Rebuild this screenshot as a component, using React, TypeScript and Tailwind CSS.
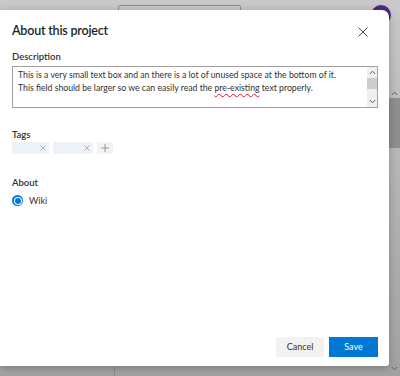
import React from "react";

const font = { fontFamily: 'Lato, "Open Sans", sans-serif' };

function XIcon({ size = 10, stroke = "#323130", sw = 1 }: { size?: number; stroke?: string; sw?: number }) {
  return (
    <svg width={size} height={size} viewBox="0 0 10 10" fill="none">
      <path d="M0.5 0.5 L9.5 9.5 M9.5 0.5 L0.5 9.5" stroke={stroke} strokeWidth={sw} />
    </svg>
  );
}

function Chevron({ up }: { up?: boolean }) {
  return (
    <svg width="7" height="5" viewBox="0 0 7 5" fill="none">
      <path d={up ? "M0.8 4 L3.5 1.2 L6.2 4" : "M0.8 1 L3.5 3.8 L6.2 1"} stroke="#606060" strokeWidth="1" />
    </svg>
  );
}

export default function App() {
  return (
    <div
      className="relative w-[400px] h-[376px] overflow-hidden bg-gradient-to-b from-[#c9c9c9] via-[#b4b4b4] to-[#a2a2a2]"
      style={font}
    >
      {/* background page content (behind overlay) */}
      <div className="absolute left-[118px] top-[5px] w-[123px] h-[20px] border border-[#8c8c8c] rounded-[2px]" />
      <div className="absolute left-[371px] top-[5px] w-[20px] h-[20px] rounded-full bg-[#4b2a82]" />
      <div className="absolute left-[114px] top-[340px] w-px h-[40px] bg-[#8e8e8e]" />
      <div className="absolute right-0 top-0 w-[11px] h-full flex flex-col items-center">
        <div className="h-[88px]" />
        <div className="h-[10px] flex items-center justify-center"><Chevron up /></div>
        <div className="w-full h-[50px] bg-[#8f8f8f]" />
        <div className="flex-1" />
        <div className="h-[10px] flex items-center justify-center mb-[3px]"><Chevron /></div>
      </div>

      {/* dialog */}
      <div className="absolute left-0 top-[10px] w-[389px] h-[356px] bg-white rounded-tr-[7px] rounded-br-[3px] shadow-[0_2px_8px_rgba(0,0,0,0.25)] flex flex-col">
        <div className="flex items-center justify-between pl-[12px] pr-[21px] pt-[3px] h-[40px]">
          <div className="text-[12.5px] font-semibold tracking-[-0.2px] text-[#201f1e] leading-none">About this project</div>
          <XIcon size={10} stroke="#4a4a4a" />
        </div>

        <div className="px-[12px] flex flex-col">
          <div className="text-[9.5px] font-semibold text-[#323130] leading-[14px]">Description</div>
          <div className="mt-[2px] w-[366px] h-[42px] border border-[#a19f9d] flex">
            <div className="flex-1 pl-[5px] pt-[1px] text-[8.7px] leading-[13px] text-[#323130] whitespace-nowrap">
              <div>This is a very small text box and an there is a lot of unused space at the bottom of it.</div>
              <div>
                This field should be larger so we can easily read the{" "}
                <span className="underline decoration-wavy decoration-[#e81123] decoration-[0.5px] underline-offset-2">pre-existing</span>{" "}
                text properly.
              </div>
            </div>
            <div className="w-[10px] bg-[#f0f0f0] flex flex-col items-center">
              <div className="h-[11px] flex items-center justify-center"><Chevron up /></div>
              <div className="w-full h-[11px] bg-[#cdcdcd]" />
              <div className="flex-1" />
              <div className="h-[11px] flex items-center justify-center"><Chevron /></div>
            </div>
          </div>

          <div className="mt-[20px] text-[9.5px] font-semibold text-[#323130] leading-[14px]">Tags</div>
          <div className="flex items-center gap-[4px]">
            <div className="w-[37px] h-[12px] bg-[#eef3f9] flex items-center justify-end pr-[3px]">
              <XIcon size={6} stroke="#8a8a8a" />
            </div>
            <div className="w-[40px] h-[12px] bg-[#eef3f9] flex items-center justify-end pr-[3px]">
              <XIcon size={6} stroke="#8a8a8a" />
            </div>
            <div className="w-[16px] h-[12px] bg-[#f1f3f6] flex items-center justify-center">
              <svg width="8" height="8" viewBox="0 0 8 8" fill="none">
                <path d="M4 0 V8 M0 4 H8" stroke="#9a9a9a" strokeWidth="1" />
              </svg>
            </div>
          </div>

          <div className="mt-[22px] text-[9.5px] font-semibold text-[#323130] leading-[14px]">About</div>
          <div className="mt-[4px] flex items-center gap-[6px]">
            <div className="w-[11px] h-[11px] rounded-full bg-[#0078d4] flex items-center justify-center">
              <div className="w-[8px] h-[8px] rounded-full bg-white flex items-center justify-center">
                <div className="w-[6px] h-[6px] rounded-full bg-[#0078d4]" />
              </div>
            </div>
            <div className="text-[9px] text-[#323130]">Wiki</div>
          </div>
        </div>

        <div className="flex-1" />
        <div className="flex justify-end gap-[5px] pr-[11px] pb-[9px]">
          <button className="w-[48px] h-[20px] bg-[#f3f2f1] text-[9px] text-[#323130]">Cancel</button>
          <button className="w-[49px] h-[20px] bg-[#0078d4] text-[9px] text-white">Save</button>
        </div>
      </div>
    </div>
  );
}
